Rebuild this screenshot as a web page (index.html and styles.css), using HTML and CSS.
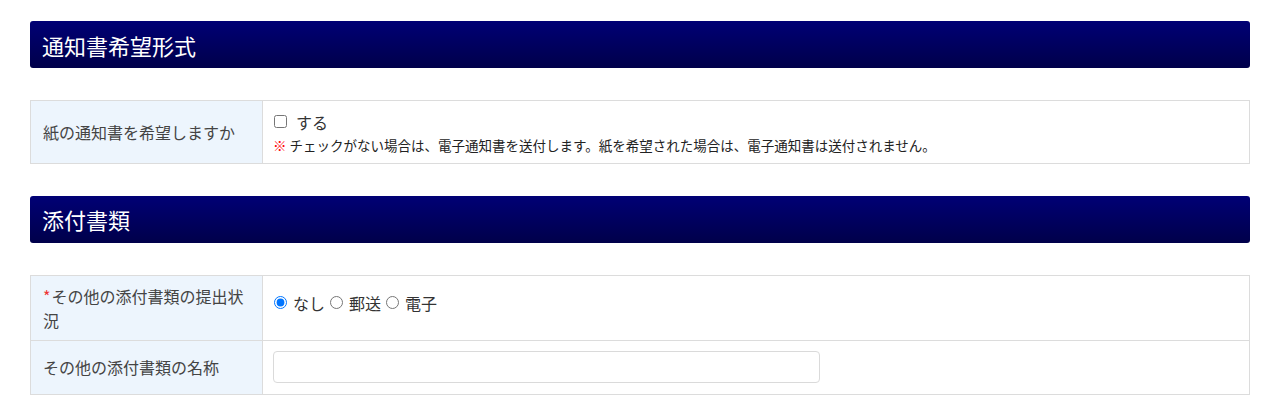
FILE: index.html
```html
<!DOCTYPE html>
<html lang="ja">
<head>
<meta charset="utf-8">
<title>通知書希望形式</title>
<link rel="stylesheet" href="styles.css">
</head>
<body>
<main class="page">
  <section class="section">
    <h2 class="section-title">通知書希望形式</h2>
    <table class="form-table">
      <tr class="row-paper">
        <th class="label">紙の通知書を希望しますか</th>
        <td class="value">
          <label class="check"><input type="checkbox"> する</label>
          <p class="note"><span class="mark">※</span> チェックがない場合は、電子通知書を送付します。紙を希望された場合は、電子通知書は送付されません。</p>
        </td>
      </tr>
    </table>
  </section>
  <section class="section">
    <h2 class="section-title">添付書類</h2>
    <table class="form-table">
      <tr class="row-status">
        <th class="label"><span class="req">*</span><span>その他の添付書類の提出状</span><span>況</span></th>
        <td class="value">
          <div class="radios">
            <label class="radio"><input type="radio" name="st" checked> なし</label>
            <label class="radio"><input type="radio" name="st"> 郵送</label>
            <label class="radio"><input type="radio" name="st"> 電子</label>
          </div>
        </td>
      </tr>
      <tr class="row-name">
        <th class="label">その他の添付書類の名称</th>
        <td class="value"><input class="text-input" type="text"></td>
      </tr>
    </table>
  </section>
</main>
</body>
</html>
```
FILE: styles.css
```css
* { box-sizing: border-box; }
html, body { margin: 0; padding: 0; background: #fff; }
body {
  font-family: "Noto Sans CJK JP", "Noto Sans", sans-serif;
  color: #333;
  font-size: 16px;
}
.page {
  padding: 21px 30px 0 30px;
}
.section { margin-bottom: 32px; }
.section-title {
  margin: 0 0 32px 0;
  height: 47px;
  display: flex;
  align-items: center;
  padding: 0 12px;
  color: #fff;
  font-size: 22px;
  font-weight: 400;
  border-radius: 3px;
  background: linear-gradient(to bottom, #000075, #00004a);
}
.form-table {
  width: 100%;
  border-collapse: collapse;
  border: 1px solid #dcdcdc;
}
.form-table th, .form-table td {
  border: 1px solid #dcdcdc;
  vertical-align: middle;
  text-align: left;
}
.label {
  width: 232px;
  background: #edf5fd;
  font-weight: 400;
  font-size: 16px;
  line-height: 24px;
  color: #444;
  padding: 8px 12px;
}
.value {
  padding: 8px 10px;
  line-height: 24px;
}
.check, .radio {
  display: inline-flex;
  align-items: center;
  font-size: 16px;
  color: #333;
}
.check input { margin: 0 9px 0 1px; width: 13px; height: 13px; }
.radio input { margin: 0 6px 0 1px; width: 13px; height: 13px; }
.radios { display: flex; gap: 4px; }
.note {
  margin: 0;
  font-size: 13.5px;
  line-height: 22px;
  color: #222;
}
.mark { color: #f00; font-weight: 700; }
.req { color: #e33; margin-right: 1px; }
.row-paper .value { padding-bottom: 7px; }
.row-status .label { padding-top: 8px; padding-bottom: 8px; }
.row-status .value { padding-bottom: 18px; }
.row-name .value { padding-top: 10px; padding-bottom: 11px; }
.text-input {
  display: block;
  width: 547px;
  height: 32px;
  border: 1px solid #dadada;
  border-radius: 4px;
  font-size: 16px;
  padding: 4px 8px;
}
```
